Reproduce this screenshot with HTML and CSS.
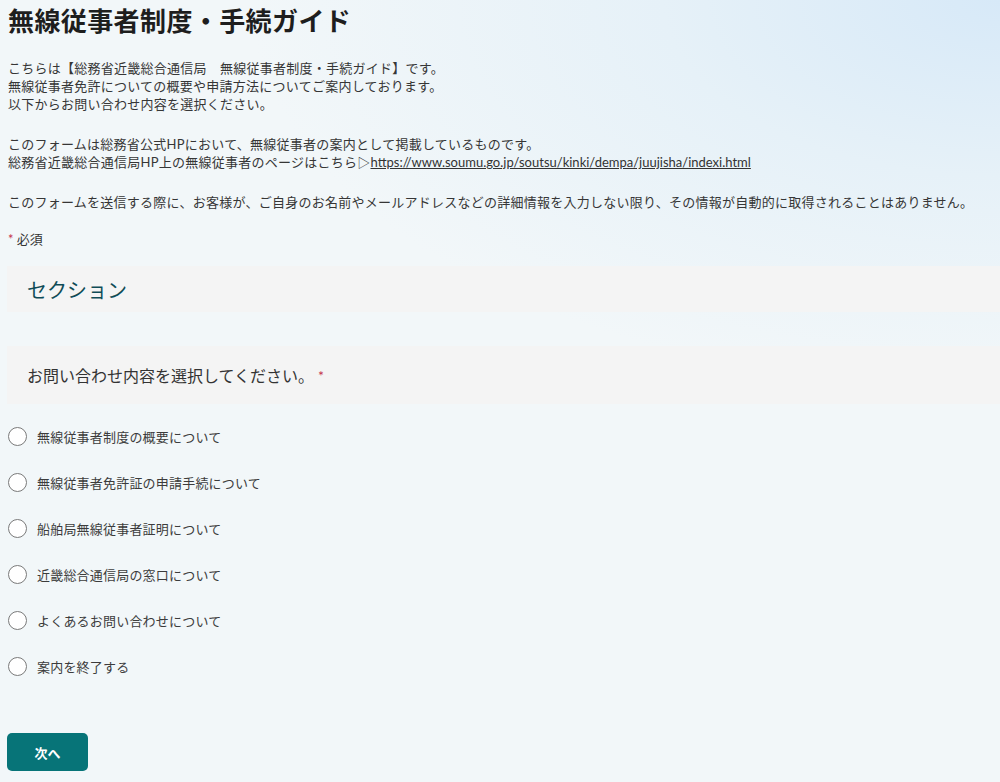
FILE: index.html
```html
<!DOCTYPE html>
<html lang="ja">
<head>
  <meta charset="UTF-8" />
  <meta name="viewport" content="width=device-width, initial-scale=1.0" />
  <title>無線従事者制度・手続ガイド</title>
  <link rel="stylesheet" href="styles.css">
</head>
<body>
  <div class="page">
    <h1>無線従事者制度・手続ガイド</h1>

    <p class="desc">こちらは【総務省近畿総合通信局　無線従事者制度・手続ガイド】です。<br>
      無線従事者免許についての概要や申請方法についてご案内しております。<br>
      以下からお問い合わせ内容を選択ください。</p>
    <p class="desc">このフォームは総務省公式HPにおいて、無線従事者の案内として掲載しているものです。<br>
      総務省近畿総合通信局HP上の無線従事者のページはこちら▷<a href="#">https://www.soumu.go.jp/soutsu/kinki/dempa/juujisha/indexi.html</a></p>
    <p class="desc">このフォームを送信する際に、お客様が、ご自身のお名前やメールアドレスなどの詳細情報を入力しない限り、その情報が自動的に取得されることはありません。</p>

    <div class="required"><span class="star">*</span> 必須</div>

    <div class="section">セクション</div>

    <div class="question">お問い合わせ内容を選択してください。 <span class="star">*</span></div>

    <div class="options">
      <label class="option"><span class="radio"></span>無線従事者制度の概要について</label>
      <label class="option"><span class="radio"></span>無線従事者免許証の申請手続について</label>
      <label class="option"><span class="radio"></span>船舶局無線従事者証明について</label>
      <label class="option"><span class="radio"></span>近畿総合通信局の窓口について</label>
      <label class="option"><span class="radio"></span>よくあるお問い合わせについて</label>
      <label class="option"><span class="radio"></span>案内を終了する</label>
    </div>

    <button class="next" type="button">次へ</button>
  </div>
</body>
</html>
```

FILE: styles.css
```css
html, body {
  margin: 0;
  height: 100%;
}
body {
  font-family: Lato, "Noto Sans CJK JP", "Noto Sans", sans-serif;
  color: #333;
  overflow: hidden;
  background-color: #f2f7f9;
  background-image: radial-gradient(ellipse 75% 50% at 100% 0%, #d7e9f8 0%, #e6f1f8 45%, rgba(242,247,249,0) 100%);
}
.page {
  padding: 3px 0 0 8px;
}
h1 {
  margin: 0 0 22px;
  font-family: "Noto Sans CJK JP", sans-serif;
  font-size: 26px;
  line-height: 34px;
  font-weight: bold;
  letter-spacing: 0.4px;
  color: #1e1e1e;
}
.desc {
  margin: 0 0 22px;
  font-size: 13px;
  line-height: 18px;
  letter-spacing: 0.25px;
  color: #363636;
}
.desc a {
  color: #333;
  text-decoration: underline;
  letter-spacing: 0;
}
.desc:last-of-type {
  margin-bottom: 19px;
}
.required {
  font-size: 13px;
  line-height: 18px;
  color: #333;
  margin-bottom: 18px;
}
.star {
  color: #c4314b;
}
.section {
  margin-left: -1px;
  height: 46px;
  display: flex;
  align-items: center;
  padding-left: 20px;
  background: #f4f4f4;
  font-size: 20px;
  color: #0f4c57;
  margin-bottom: 34px;
}
.question {
  margin-left: -1px;
  height: 58px;
  display: flex;
  align-items: center;
  padding-left: 20px;
  background: #f4f4f4;
  font-size: 16px;
  color: #333;
  margin-bottom: 9px;
}
.question .star {
  margin-left: 4px;
  font-size: 14px;
}
.options {
  margin-bottom: 44px;
}
.option {
  display: flex;
  align-items: center;
  height: 46px;
  font-size: 13px;
  letter-spacing: 0.2px;
  color: #3c3c3c;
}
.radio {
  width: 17px;
  height: 17px;
  border: 1.5px solid #7a7a7a;
  border-radius: 50%;
  margin-right: 10px;
  background: #fff;
  flex-shrink: 0;
}
.next {
  margin-left: -1px;
  width: 81px;
  height: 38px;
  border: none;
  border-radius: 5px;
  background: #077478;
  color: #fff;
  font-family: "Noto Sans CJK JP", sans-serif;
  font-size: 13px;
  font-weight: bold;
  cursor: pointer;
}
```
